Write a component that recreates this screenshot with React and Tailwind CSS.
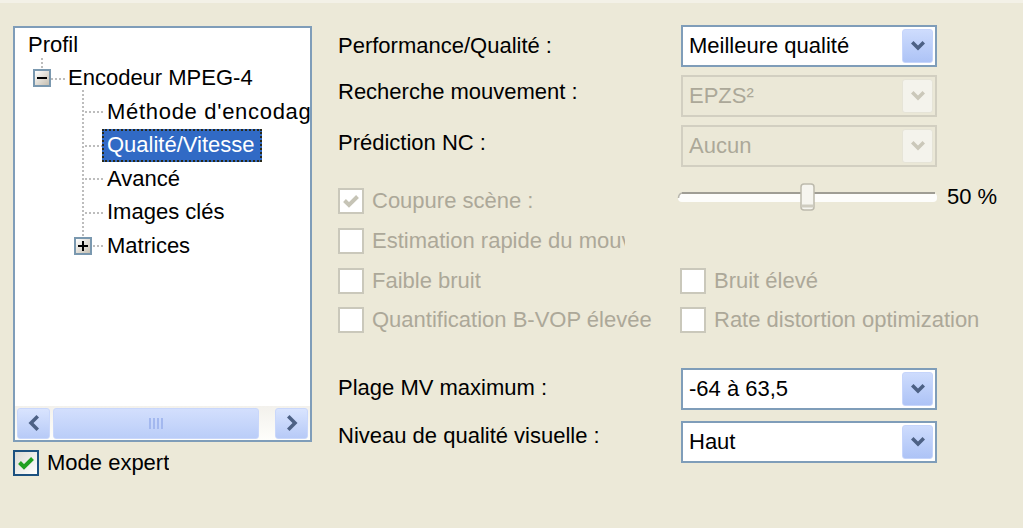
import React from 'react';

// XP "Luna" look, everything at 2x
const gray = 'text-[#ACA899]';

function Chevron({ disabled }) {
  return (
    <svg width="14" height="10" viewBox="0 0 14 10">
      <polygon points="0,2.5 2.5,0 7,4.5 11.5,0 14,2.5 7,9.5" fill={disabled ? '#CBC8BA' : '#4D6185'} />
    </svg>
  );
}

function Combo({ value, disabled }) {
  return (
    <div
      className={`h-[42px] w-[256px] flex items-center border-2 pl-[6px] pr-[2px] ${
        disabled ? 'border-[#D2CFC1] bg-[#EBE8D7]' : 'border-[#7F9DB9] bg-white'
      }`}
    >
      <span className={`flex-1 whitespace-nowrap leading-[26px] ${disabled ? gray : ''}`}>{value}</span>
      <div
        className={`w-[31px] h-[34px] rounded-[3px] flex items-center justify-center ${
          disabled
            ? 'bg-[#F4F3EC] border border-[#E6E4D7]'
            : 'bg-linear-to-b from-[#CEDCFD] to-[#ADC3F6] border border-[#C6D5FB]'
        }`}
      >
        <Chevron disabled={disabled} />
      </div>
    </div>
  );
}

function Check({ checked, disabled }) {
  return (
    <div
      className={`w-[26px] h-[26px] shrink-0 border-2 flex items-center justify-center ${
        disabled ? 'border-[#CAC8BB] bg-white' : 'border-[#1C5180] bg-linear-to-br from-[#DCDBD5] to-white'
      }`}
    >
      {checked && (
        <svg width="16" height="14" viewBox="0 0 16 14">
          <path d="M1.5 6.5 L6 11 L14.5 2.5" fill="none" stroke={disabled ? '#C6C4B6' : '#21A121'} strokeWidth="4" />
        </svg>
      )}
    </div>
  );
}

function CheckRow({ label, checked, disabled, clip }) {
  return (
    <div className="flex items-center gap-[8px]">
      <Check checked={checked} disabled={disabled} />
      <span className={`whitespace-nowrap overflow-hidden leading-[28px] ${disabled ? gray : ''} ${clip ? 'w-[253px]' : ''}`}>
        {label}
      </span>
    </div>
  );
}

function Expander({ open }) {
  return (
    <div className="w-[18px] h-[18px] border-2 border-[#7A98AF] bg-linear-to-br from-white to-[#C6BFB1] flex items-center justify-center shrink-0">
      <div className="relative w-[10px] h-[2px] bg-black">
        {!open && <div className="absolute left-[4px] -top-[4px] w-[2px] h-[10px] bg-black" />}
      </div>
    </div>
  );
}

function ScrollBtn({ dir }) {
  return (
    <div className="w-[33px] h-[31px] rounded-[3px] border border-[#C9D7FB] bg-linear-to-b from-[#D9E4FE] to-[#B7CAF7] flex items-center justify-center">
      <svg width="12" height="16" viewBox="0 0 12 16">
        {dir === 'left' ? (
          <polygon points="8.5,0 11,2.5 5.5,8 11,13.5 8.5,16 0.5,8" fill="#4D6185" />
        ) : (
          <polygon points="3.5,0 1,2.5 6.5,8 1,13.5 3.5,16 11.5,8" fill="#4D6185" />
        )}
      </svg>
    </div>
  );
}

function HScroll() {
  return (
    <div className="h-[34px] flex items-center px-[2px] gap-[3px] bg-linear-to-b from-[#F3F1EC] to-[#FEFEFB]">
      <ScrollBtn dir="left" />
      <div className="w-[206px] h-[31px] rounded-[3px] border border-[#C9D7FB] bg-linear-to-b from-[#D3DFFD] to-[#BACDF8] flex items-center justify-center gap-[2px]">
        <div className="w-[2px] h-[11px] bg-[#A3B8EF]" />
        <div className="w-[2px] h-[11px] bg-[#A3B8EF]" />
        <div className="w-[2px] h-[11px] bg-[#A3B8EF]" />
        <div className="w-[2px] h-[11px] bg-[#A3B8EF]" />
      </div>
      <div className="flex-1" />
      <ScrollBtn dir="right" />
    </div>
  );
}

const rowH = 'h-[33.5px]';

function Tree() {
  return (
    <div className="h-[416px] border-2 border-[#7F9DB9] bg-white flex flex-col">
      <div className="flex-1 relative overflow-hidden">
        {/* dotted connectors */}
        <svg className="absolute inset-0" width="295" height="240">
          <g stroke="#A8A8A8" strokeWidth="1.5" strokeDasharray="2 2" fill="none">
            <line x1="27" y1="30" x2="27" y2="41" />
            <line x1="36" y1="51" x2="50" y2="51" />
            <line x1="68" y1="62" x2="68" y2="209" />
            <line x1="70" y1="84" x2="88" y2="84" />
            <line x1="70" y1="118" x2="88" y2="118" />
            <line x1="70" y1="151" x2="88" y2="151" />
            <line x1="70" y1="185" x2="88" y2="185" />
            <line x1="78" y1="218" x2="88" y2="218" />
          </g>
        </svg>
        <div className="relative flex flex-col">
          <div className={`${rowH} flex items-center pl-[13px]`}>Profil</div>
          <div className={`${rowH} flex items-center pl-[18px]`}>
            <Expander open />
            <span className="ml-[17px] whitespace-nowrap">Encodeur MPEG-4</span>
          </div>
          <div className={`${rowH} flex items-center pl-[92px] whitespace-nowrap tracking-[0.7px]`}>Méthode d'encodage</div>
          <div className={`${rowH} flex items-center pl-[87px]`}>
            <span className="h-full flex items-center pl-[3px] pr-[5px] bg-[#316AC5] text-white border-2 border-dotted border-[#2A2A1A] whitespace-nowrap">
              Qualité/Vitesse
            </span>
          </div>
          <div className={`${rowH} flex items-center pl-[92px]`}>Avancé</div>
          <div className={`${rowH} flex items-center pl-[92px] whitespace-nowrap`}>Images clés</div>
          <div className={`${rowH} flex items-center pl-[59px]`}>
            <Expander />
            <span className="ml-[15px]">Matrices</span>
          </div>
        </div>
      </div>
      <HScroll />
    </div>
  );
}

function Slider() {
  return (
    <div className="flex items-center mb-[8px]">
      <svg width="262" height="28" viewBox="0 0 262 28" className="-ml-[4px]">
        <rect x="1" y="10" width="259" height="9" rx="4" fill="#FDFDFB" />
        <path d="M5 10 H258" stroke="#9F9D94" strokeWidth="2" />
        <path d="M1.5 15 Q1.5 11 5 10" stroke="#B8B6AC" strokeWidth="1.5" fill="none" />
        <rect x="124" y="1" width="13" height="26" rx="3" fill="#F6F5EF" stroke="#BDBAAD" strokeWidth="1.5" />
        <path d="M125 23 H136" stroke="#CFCCC0" strokeWidth="3" />
      </svg>
      <span className="ml-[8px] leading-[26px]">50 %</span>
    </div>
  );
}

export default function App() {
  return (
    <div className="w-[1023px] h-[528px] overflow-hidden bg-[#ECE9D8] flex flex-col text-[22px] leading-none text-black font-['Liberation_Sans',Arial,sans-serif]">
      <div className="h-[3px] bg-[#F3F1E7]" />
      <div className="flex pl-[13px] pt-[22px]">
        <div className="w-[299px] flex flex-col">
          <div className="mt-[1px]">
            <Tree />
          </div>
          <div className="mt-[7px]">
            <CheckRow label="Mode expert" checked />
          </div>
        </div>

        <div className="ml-[26px] flex flex-col">
          <div className="flex items-center h-[42px]">
            <span className="w-[343px] leading-[26px]">Performance/Qualité :</span>
            <Combo value="Meilleure qualité" />
          </div>
          <div className="flex items-center h-[42px] mt-[8px]">
            <span className="w-[343px] leading-[26px] pb-[8px]">Recherche mouvement :</span>
            <Combo value="EPZS²" disabled />
          </div>
          <div className="flex items-center h-[42px] mt-[8px]">
            <span className="w-[343px] leading-[26px] pb-[6px]">Prédiction NC :</span>
            <Combo value="Aucun" disabled />
          </div>

          <div className="flex items-center h-[26px] mt-[21px]">
            <div className="w-[343px]">
              <CheckRow label="Coupure scène :" checked disabled />
            </div>
            <Slider />
          </div>
          <div className="flex items-center h-[26px] mt-[14px]">
            <CheckRow label="Estimation rapide du mouvement" disabled clip />
          </div>
          <div className="flex items-center h-[26px] mt-[14px]">
            <div className="w-[342px]">
              <CheckRow label="Faible bruit" disabled />
            </div>
            <CheckRow label="Bruit élevé" disabled />
          </div>
          <div className="flex items-center h-[26px] mt-[13px]">
            <div className="w-[342px]">
              <CheckRow label="Quantification B-VOP élevée" disabled />
            </div>
            <CheckRow label="Rate distortion optimization" disabled />
          </div>

          <div className="flex items-center h-[42px] mt-[35px]">
            <span className="w-[343px] leading-[26px] pb-[2px]">Plage MV maximum :</span>
            <Combo value="-64 à 63,5" />
          </div>
          <div className="flex items-center h-[42px] mt-[11px]">
            <span className="w-[343px] leading-[26px] pb-[12px]">Niveau de qualité visuelle :</span>
            <Combo value="Haut" />
          </div>
        </div>
      </div>
    </div>
  );
}
